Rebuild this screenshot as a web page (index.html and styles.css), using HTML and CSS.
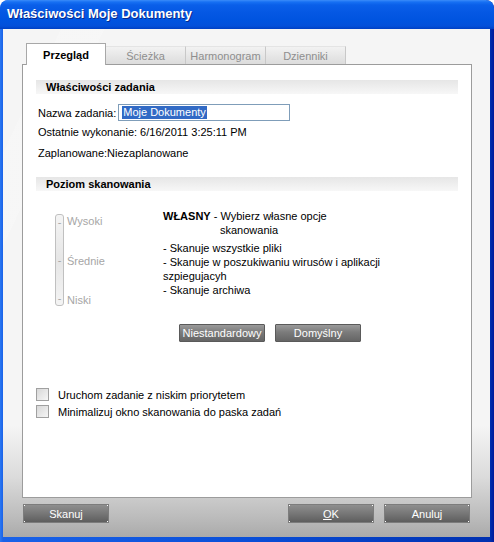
FILE: index.html
```html
<!DOCTYPE html>
<html lang="pl">
<head>
<meta charset="utf-8">
<title>Właściwości Moje Dokumenty</title>
<link rel="stylesheet" href="styles.css">
</head>
<body>
<div class="window">
  <div class="titlebar"><span class="title">Właściwości Moje Dokumenty</span></div>
  <div class="client">
    <div class="tabs">
      <div class="tab active">Przegląd</div>
      <div class="tab">Ścieżka</div>
      <div class="tab">Harmonogram</div>
      <div class="tab">Dzienniki</div>
    </div>
    <div class="panel">
      <div class="section-head">Właściwości zadania</div>
      <div class="row name-row">
        <span>Nazwa zadania:</span>
        <span class="input"><span class="sel">Moje Dokumenty</span></span>
      </div>
      <div class="row line1">Ostatnie wykonanie: 6/16/2011 3:25:11 PM</div>
      <div class="row line2">Zaplanowane:Niezaplanowane</div>
      <div class="section-head head2">Poziom skanowania</div>
      <div class="scan">
        <div class="slider">
          <div class="track">
            <span class="tick">-</span>
            <span class="tick">-</span>
            <span class="tick">-</span>
          </div>
          <div class="labels">
            <span>Wysoki</span>
            <span>Średnie</span>
            <span>Niski</span>
          </div>
        </div>
        <div class="desc">
          <div class="d-title"><b>WŁASNY</b> - Wybierz własne opcje</div>
          <div class="d-indent">skanowania</div>
          <div class="d-list">
            <div>- Skanuje wszystkie pliki</div>
            <div>- Skanuje w poszukiwaniu wirusów i aplikacji</div>
            <div>szpiegujacyh</div>
            <div>- Skanuje archiwa</div>
          </div>
        </div>
      </div>
      <div class="btn-row">
        <div class="btn">Niestandardowy</div>
        <div class="btn">Domyślny</div>
      </div>
      <div class="checks">
        <label class="check"><span class="box"></span>Uruchom zadanie z niskim priorytetem</label>
        <label class="check"><span class="box"></span>Minimalizuj okno skanowania do paska zadań</label>
      </div>
    </div>
    <div class="footer">
      <div class="btn big">Skanuj</div>
      <div class="spacer"></div>
      <div class="btn big"><u>O</u>K</div>
      <div class="btn big">Anuluj</div>
    </div>
  </div>
</div>
</body>
</html>
```

FILE: styles.css
```css
* { box-sizing: border-box; }
html, body { margin: 0; padding: 0; }
body {
  width: 494px;
  height: 542px;
  overflow: hidden;
  font-family: "Liberation Sans", Arial, sans-serif;
  font-size: 11px;
  color: #000;
  background: #fff;
}
.window {
  width: 494px;
  height: 542px;
  display: flex;
  flex-direction: column;
  border-radius: 8px 8px 0 0;
  background: linear-gradient(to right, #2b78f2 0, #1a62e8 3px, #0a4fd8 50%, #0030b0 490px, #00199a 494px);
  overflow: hidden;
}
.titlebar {
  height: 29px;
  flex: none;
  display: flex;
  align-items: center;
  padding-left: 7px;
  background: linear-gradient(to bottom, #3b8cf9 0, #1770f3 2px, #0a5fe9 5px, #0558e4 12px, #0054e0 20px, #0350da 26px, #0040c4 29px);
  border-radius: 8px 8px 0 0;
}
.title {
  color: #fff;
  font-family: "Liberation Sans", Arial, sans-serif;
  font-weight: bold;
  font-size: 13px;
  text-shadow: 1px 1px 0 #0a2a8a;
  margin-top: -2px;
}
.client {
  flex: 1;
  margin: 0 4px 5px 3px;
  padding: 14px 18px 0 19px;
  display: flex;
  flex-direction: column;
  background:
    linear-gradient(115deg, rgba(255,255,255,0) 0, rgba(255,255,255,0) 8%, rgba(255,255,255,0.18) 8%, rgba(255,255,255,0.18) 14%, rgba(255,255,255,0) 14%),
    linear-gradient(to bottom, #f5f5f5 0, #f5f5f5 78%, #dcdcdc 88%, #bcbcbc 96%, #aaaaaa 100%);
}
.tabs {
  display: flex;
  align-items: flex-end;
  padding-left: 4px;
  height: 21px;
  flex: none;
}
.tab {
  width: 80px;
  height: 18px;
  display: flex;
  align-items: center;
  justify-content: center;
  color: #8e8e8e;
  background: linear-gradient(to bottom, #f2f2f2, #dcdcdc);
  border-right: 1px solid #c8c8c8;
  border-top: 1px solid #e4e4e4;
}
.tab.active {
  width: 80px;
  height: 22px;
  margin-bottom: -1px;
  background: #fff;
  color: #000;
  font-weight: bold;
  border: 1px solid #a8a8a8;
  border-bottom: none;
  position: relative;
  z-index: 1;
  padding-top: 1px;
}
.panel {
  height: 434px;
  flex: none;
  background: #fff;
  border: 1px solid #9c9c9c;
  padding: 15px 13px 0 13px;
  display: flex;
  flex-direction: column;
}
.section-head {
  height: 14px;
  line-height: 14px;
  font-weight: bold;
  padding-left: 10px;
  background: linear-gradient(to bottom, #e6e6e6, #f7f7f7);
}
.row { padding-left: 2px; height: 17px; display: flex; align-items: center; }
.name-row { margin-top: 10px; }
.input {
  margin-left: 2px;
  width: 172px;
  height: 17px;
  border: 1px solid #7f9db9;
  display: flex;
  align-items: center;
  padding-left: 3px;
}
.sel { background: #316ac5; color: #fff; line-height: 13px; padding: 0 1px; }
.line1 { margin-top: 2px; }
.line2 { margin-top: 4px; }
.head2 { margin-top: 16px; }
.scan {
  display: flex;
  margin-top: 23px;
  height: 95px;
}
.slider {
  display: flex;
  margin-left: 19px;
  width: 108px;
}
.track {
  width: 9px;
  height: 92px;
  margin-top: 0;
  border: 1px solid #c0c0c0;
  border-radius: 3px;
  background: linear-gradient(to bottom, #f4f4f4, #e6e6e6 50%, #f4f4f4);
  display: flex;
  flex-direction: column;
  justify-content: space-between;
  align-items: center;
  padding: 1px 0 0 0;
  color: #a8a8a8;
  font-size: 11px;
  line-height: 13px;
}
.labels {
  display: flex;
  flex-direction: column;
  justify-content: space-between;
  color: #a6a6a6;
  margin-left: 3px;
  height: 93px;
  padding-top: 1px;
  margin-top: 0;
  font-size: 11px;
  line-height: 13px;
}
.desc { line-height: 14px; margin-top: -5px; }
.d-indent { padding-left: 57px; }
.d-list { margin-top: 4px; }
.btn-row {
  display: flex;
  gap: 10px;
  margin-left: 143px;
  margin-top: 15px;
}
.btn {
  width: 86px;
  height: 18px;
  display: flex;
  align-items: center;
  justify-content: center;
  color: #fff;
  background: linear-gradient(to bottom, #9a9a9a 0, #7b7b7b 45%, #656565 100%);
  border: 1px solid #5a5a5a;
  border-radius: 1px;
}
.checks {
  margin-top: 46px;
  display: flex;
  flex-direction: column;
  gap: 4px;
}
.check {
  display: flex;
  align-items: center;
  height: 13px;
}
.box {
  width: 13px;
  height: 13px;
  border: 1px solid #a0a0a0;
  background: linear-gradient(135deg, #d8d8d8, #f6f6f6);
  margin-right: 9px;
}
.footer {
  display: flex;
  gap: 10px;
  margin-top: 6px;
  margin-left: 1px;
  margin-right: 2px;
}
.spacer { flex: 1; }
.btn.big {
  height: 19px;
  border: 1px solid #7c7c7c;
  border-radius: 0;
  background:
    linear-gradient(#fff, #fff) left top / 1px 1px no-repeat,
    linear-gradient(#fff, #fff) right top / 1px 1px no-repeat,
    linear-gradient(#fff, #fff) left bottom / 1px 1px no-repeat,
    linear-gradient(#fff, #fff) right bottom / 1px 1px no-repeat,
    linear-gradient(to bottom, #8e8e8e 0, #777 50%, #5e5e5e 100%);
}
.btn.big u { text-decoration: underline; }
```
